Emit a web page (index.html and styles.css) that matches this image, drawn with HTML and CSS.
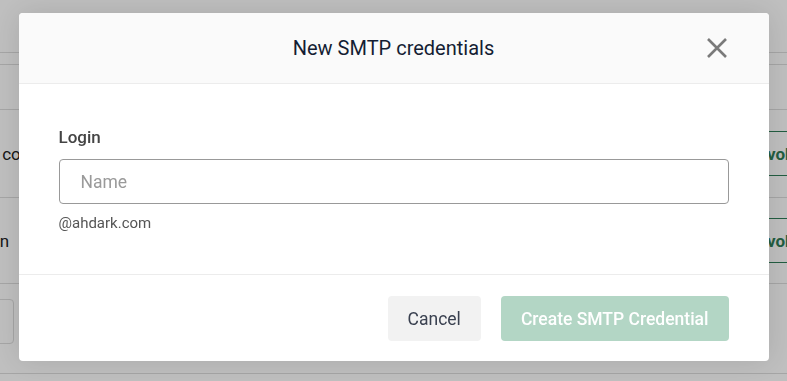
FILE: index.html
```html
<!DOCTYPE html>
<html lang="en">

<head>
    <meta charset="UTF-8">
    <meta name="viewport" content="width=device-width, initial-scale=1.0">
    <title>SMTP credentials</title>
    <link rel="stylesheet" href="styles.css">
</head>

<body>
    <!-- page behind the dialog -->
    <div class="page">
        <div class="topbar"></div>
        <div class="subbar"></div>
        <div class="row row-head"></div>
        <div class="row row-tall">
            <span class="cell-name">Marketing co</span>
            <button class="btn-outline">Revoke</button>
        </div>
        <div class="row row-mid">
            <span class="cell-name cell-short">Admin</span>
            <button class="btn-outline">Revoke</button>
        </div>
        <div class="row row-foot">
            <div class="fake-box"></div>
        </div>
    </div>

    <!-- dialog -->
    <div class="overlay">
        <div class="modal">
            <div class="modal-header">
                <h2>New SMTP credentials</h2>
                <button class="close" aria-label="Close">
                    <svg width="20" height="20" viewBox="0 0 20 20">
                        <path d="M1 1 L19 19 M19 1 L1 19" stroke="#7a7a7a" stroke-width="2.6" fill="none" />
                    </svg>
                </button>
            </div>

            <div class="modal-body">
                <label for="login">Login</label>
                <input id="login" type="text" placeholder="Name">
                <div class="hint">@ahdark.com</div>
            </div>

            <div class="modal-footer">
                <button class="btn-cancel">Cancel</button>
                <button class="btn-create" disabled>Create SMTP Credential</button>
            </div>
        </div>
    </div>
</body>

</html>
```

FILE: styles.css
```css
body {
    margin: 0;
    padding: 0;
    font-family: Roboto, "Liberation Sans", sans-serif;
    background-color: #ffffff;
}

.page {
    height: 381px;
    overflow: hidden;
}

.topbar {
    height: 52px;
    border-bottom: 1px solid #dddddd;
}

.subbar {
    height: 11px;
    border-bottom: 1px solid #dddddd;
}

.row {
    display: flex;
    align-items: center;
    justify-content: space-between;
    border-bottom: 1px solid #dddddd;
}

.row-head {
    height: 44px;
}

.row-tall {
    height: 87px;
}

.row-mid {
    height: 85px;
}

.row-foot {
    height: 89px;
    align-items: flex-start;
}

.cell-name {
    margin-left: -78px;
    font-size: 17px;
    color: #222;
}

.cell-short {
    margin-left: -40px;
}

.btn-outline {
    margin-right: -44px;
    width: 88px;
    height: 45px;
    padding: 0;
    background: #ffffff;
    border: 1px solid #2e7d57;
    border-radius: 4px;
    color: #2e7d57;
    font-family: Roboto, "Liberation Sans", sans-serif;
    font-size: 17px;
    font-weight: 700;
    text-align: left;
    text-indent: 3px;
}

.fake-box {
    margin: 15px 0 0 -20px;
    width: 32px;
    height: 43px;
    border: 1px solid #dddddd;
    border-radius: 4px;
}

.overlay {
    position: fixed;
    top: 0;
    left: 0;
    right: 0;
    bottom: 0;
    background: rgba(0, 0, 0, 0.25);
    display: flex;
    justify-content: center;
    align-items: flex-start;
    padding-top: 13px;
}

.modal {
    width: 750px;
    background: #ffffff;
    border-radius: 4px;
    box-shadow: 0 0 30px rgba(0, 0, 0, 0.12);
    overflow: hidden;
}

.modal-header {
    position: relative;
    height: 70px;
    display: flex;
    align-items: center;
    justify-content: center;
    background: #fafafa;
    border-bottom: 1px solid #ececec;
}

.modal-header h2 {
    margin: 0;
    font-size: 20px;
    font-weight: 400;
    color: #141d33;
}

.close {
    position: absolute;
    right: 42px;
    top: 25px;
    width: 20px;
    height: 20px;
    padding: 0;
    border: none;
    background: none;
    cursor: pointer;
}

.close svg {
    display: block;
}

.modal-body {
    padding: 43px 40px 42px;
}

label {
    display: block;
    font-size: 17px;
    line-height: 20px;
    font-weight: 500;
    color: #444444;
}

input {
    display: block;
    box-sizing: border-box;
    width: 100%;
    height: 45px;
    margin-top: 12px;
    padding: 0 21px;
    border: 1px solid #999999;
    border-radius: 4px;
    font-family: Roboto, "Liberation Sans", sans-serif;
    font-size: 17.5px;
    color: #333;
}

input::placeholder {
    color: #9a9a9a;
}

.hint {
    margin-top: 11px;
    font-size: 15px;
    line-height: 17px;
    color: #555555;
}

.modal-footer {
    display: flex;
    justify-content: flex-end;
    gap: 20px;
    padding: 21px 40px 20px;
    border-top: 1px solid #ececec;
}

.modal-footer button {
    height: 45px;
    padding: 0 20px;
    border: none;
    border-radius: 4px;
    font-family: Roboto, "Liberation Sans", sans-serif;
    font-size: 17.5px;
    white-space: nowrap;
}

.btn-cancel {
    background: #f2f2f2;
    color: #3a4150;
    cursor: pointer;
}

.btn-create {
    background: #b3d6c5;
    color: #ffffff;
    font-weight: 500;
}
```
